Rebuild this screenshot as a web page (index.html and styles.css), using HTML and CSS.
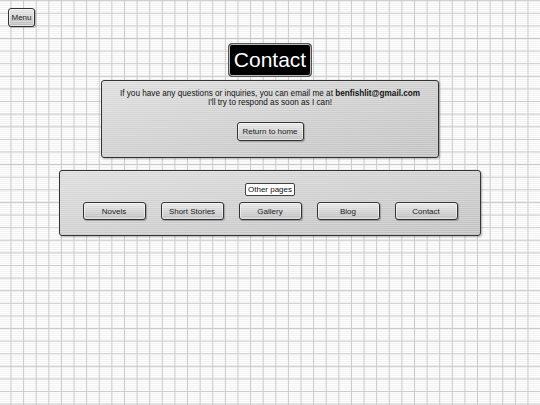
FILE: index.html
```html
<!DOCTYPE html>
<html>
<head>
<meta charset="utf-8">
<title>Contact</title>
<link rel="stylesheet" href="styles.css">
</head>
<body>
<button class="btn menu-btn">Menu</button>
<div class="title-wrap"><h1 class="title">Contact</h1></div>
<section class="panel contact-panel">
  <p class="msg">If you have any questions or inquiries, you can email me at <b>benfishlit@gmail.com</b><br>I'll try to respond as soon as I can!</p>
  <button class="btn home-btn">Return to home</button>
</section>
<section class="panel pages-panel">
  <span class="label">Other pages</span>
  <div class="nav">
    <button class="btn nav-btn">Novels</button>
    <button class="btn nav-btn">Short Stories</button>
    <button class="btn nav-btn">Gallery</button>
    <button class="btn nav-btn">Blog</button>
    <button class="btn nav-btn">Contact</button>
  </div>
</section>
</body>
</html>
```
FILE: styles.css
```css
html, body { height: 100%; }
body {
  margin: 0;
  padding: 8px;
  box-sizing: border-box;
  font-family: "Liberation Sans", Arial, sans-serif;
  font-size: 8px;
  color: #111;
  background-color: #fff;
  background-image:
    linear-gradient(to right, #c9c9c9 1.4px, transparent 1.4px),
    linear-gradient(to bottom, #c9c9c9 1.4px, transparent 1.4px),
    repeating-linear-gradient(to bottom, #fff 0 1px, #f2f2f2 1px 2px);
  background-size: 12.62px 12.62px, 12.62px 12.62px, auto;
  background-position: 10.5px 0, 0 0.2px, 0 0;
}
.btn {
  display: block;
  font-family: inherit;
  font-size: 8px;
  color: #222;
  border: 1px solid #333;
  border-radius: 3px;
  padding: 0;
  background-image:
    repeating-linear-gradient(to bottom, rgba(255,255,255,0.18) 0 1px, rgba(0,0,0,0.03) 1px 2px),
    linear-gradient(to bottom, #ececec, #c2c2c2);
  box-shadow: 1px 1px 1px rgba(0,0,0,0.25), inset 0 0 0 1px rgba(255,255,255,0.5);
}
.menu-btn {
  width: 27px;
  height: 19px;
}
.title-wrap {
  display: flex;
  justify-content: center;
  margin-top: 16px;
}
.title {
  margin: 0;
  width: 84px;
  height: 34px;
  box-sizing: border-box;
  background: #000;
  color: #fff;
  font-weight: normal;
  font-size: 21px;
  line-height: 32px;
  text-align: center;
  border: 1px solid #555;
  border-radius: 4px;
  box-shadow: inset 0 0 0 1px #bbb, inset 0 0 0 2px #000;
}
.panel {
  margin-left: auto;
  margin-right: auto;
  box-sizing: border-box;
  border: 1px solid #333;
  border-radius: 3px;
  background-image:
    repeating-linear-gradient(to bottom, rgba(255,255,255,0.22) 0 1px, rgba(0,0,0,0.025) 1px 2px),
    linear-gradient(to bottom right, #e0e0e0, #c4c4c4);
  box-shadow: 1px 1px 2px rgba(0,0,0,0.3);
  display: flex;
  flex-direction: column;
  align-items: center;
}
.contact-panel {
  margin-top: 3px;
  width: 338px;
  height: 78px;
  padding-top: 8px;
}
.msg {
  margin: 0;
  text-align: center;
  line-height: 9px;
  font-size: 8.2px;
}
.msg b { font-weight: bold; }
.home-btn {
  margin-top: 15px;
  width: 67px;
  height: 19px;
}
.pages-panel {
  margin-top: 12px;
  width: 422px;
  height: 66px;
  padding-top: 12px;
}
.label {
  display: block;
  background: #fff;
  border: 1px solid #444;
  border-radius: 2px;
  padding: 0 2px;
  height: 13px;
  line-height: 12px;
  box-sizing: border-box;
}
.nav {
  display: flex;
  gap: 15px;
  margin-top: 6px;
}
.nav-btn {
  width: 63px;
  height: 18px;
}
```
